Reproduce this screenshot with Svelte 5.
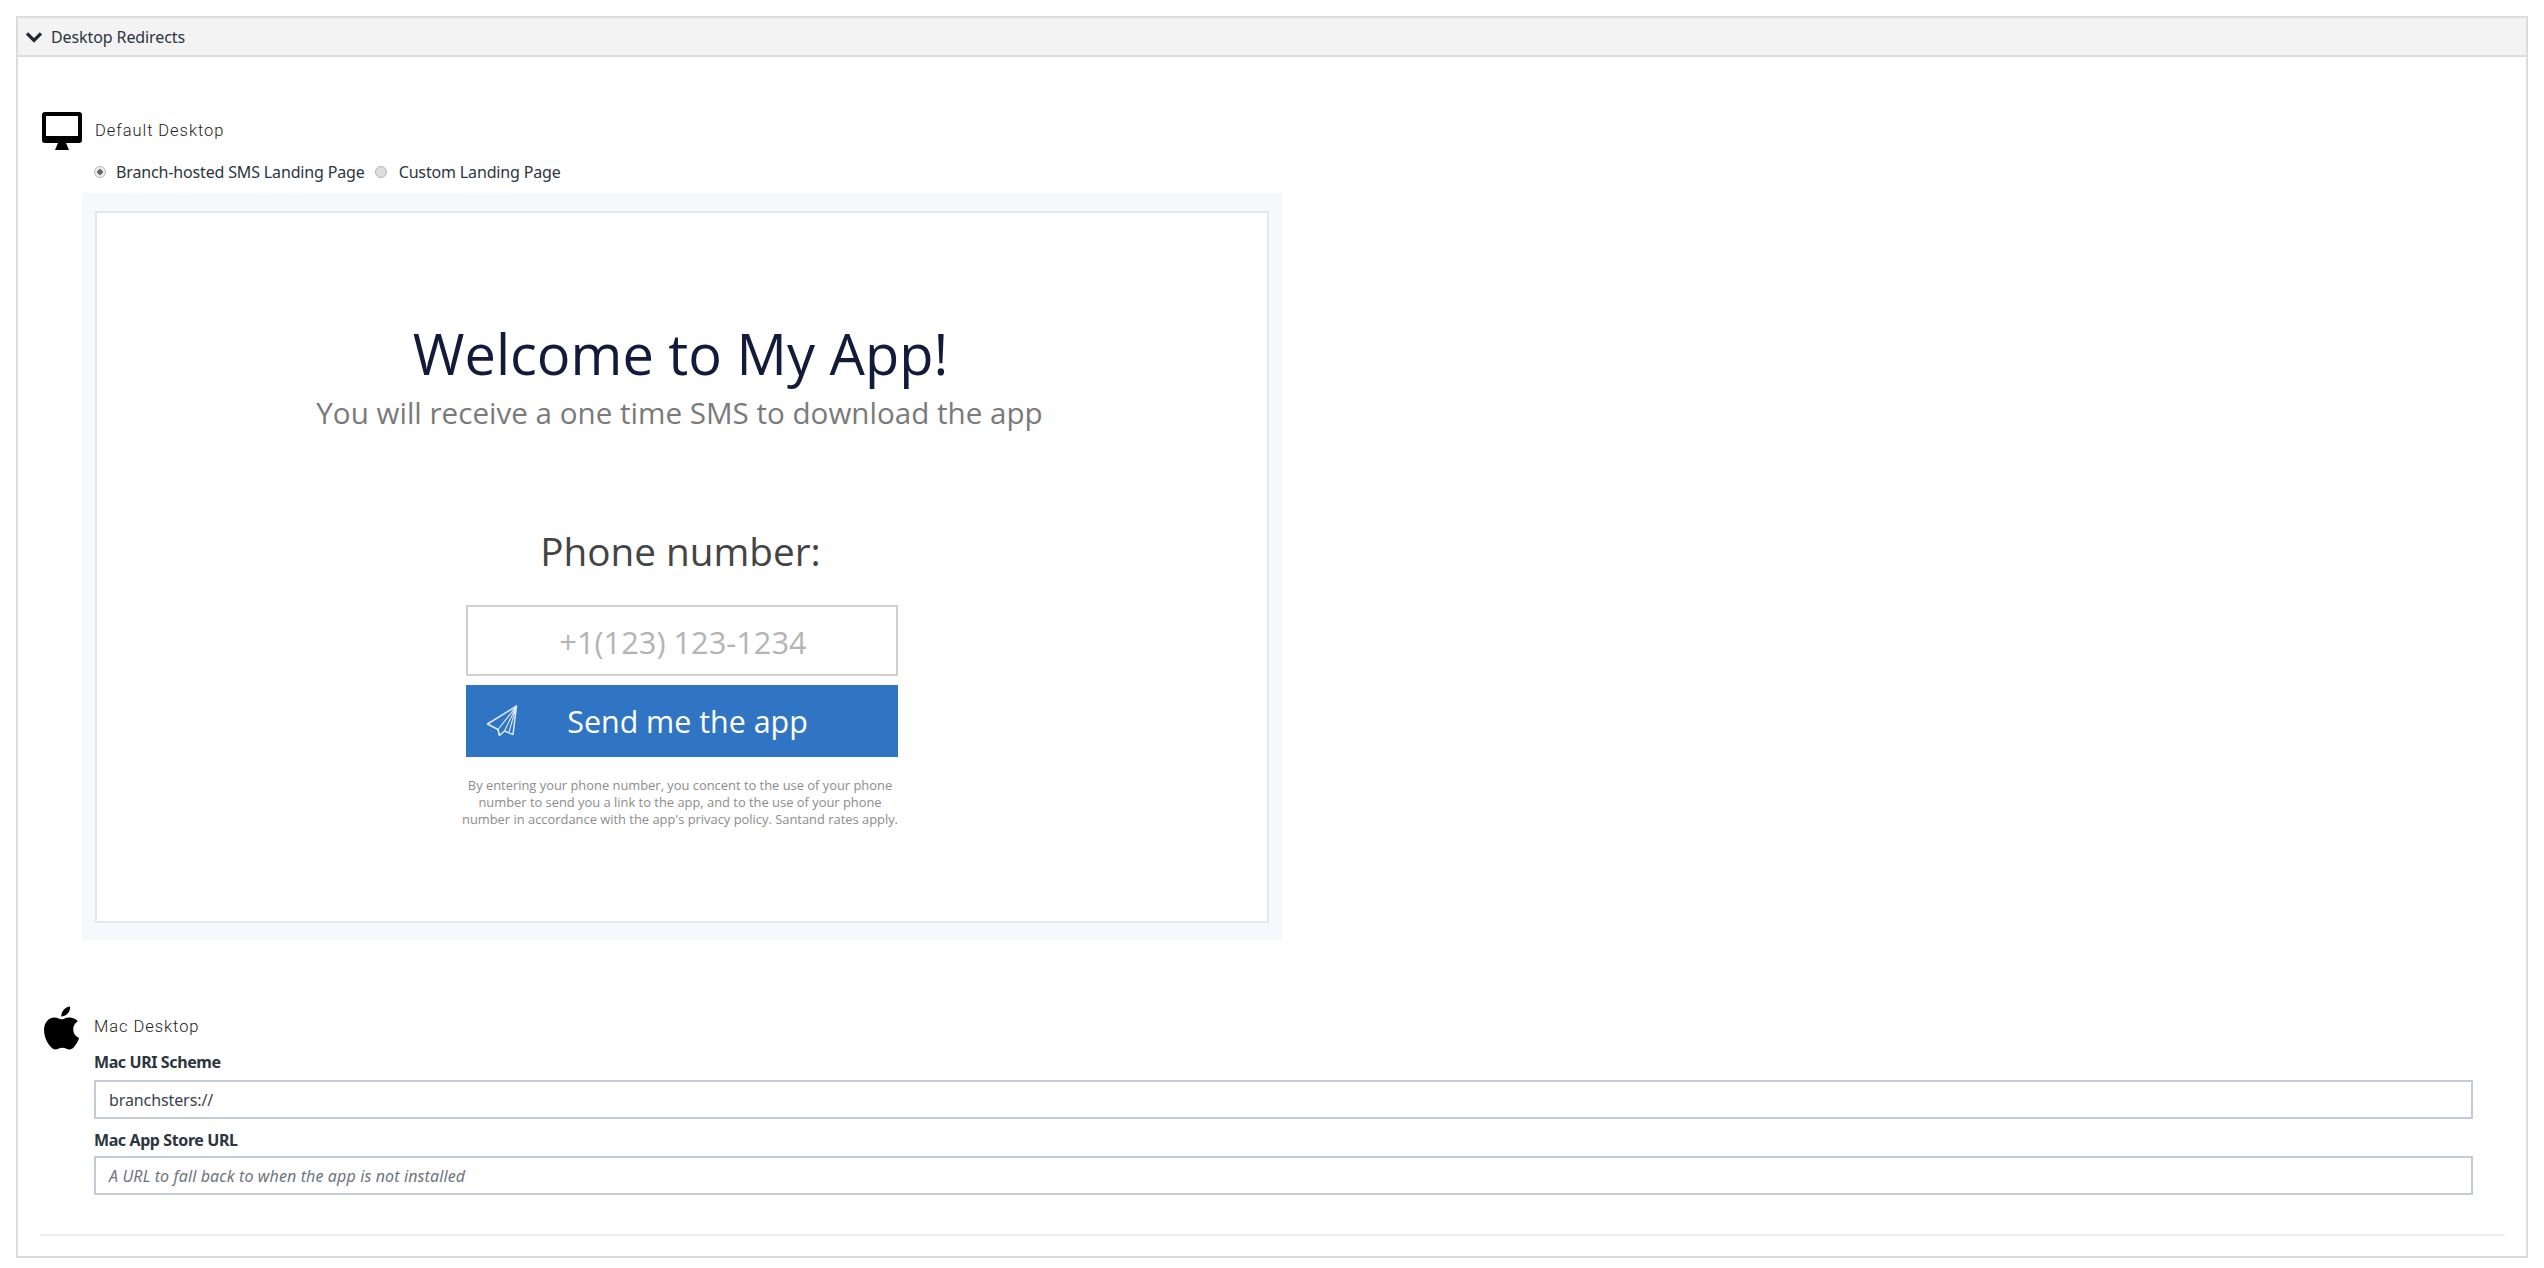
<script>
  const fields = [
    { label: 'Mac URI Scheme', value: 'branchsters://', placeholder: '' },
    { label: 'Mac App Store URL', value: '', placeholder: 'A URL to fall back to when the app is not installed' }
  ];
</script>

<div class="page">
  <section class="panel">
    <header class="head">
      <svg class="chev" viewBox="0 0 18 12" width="18" height="12"><path d="M2 2.4 9 9.4l7-7" fill="none" stroke="#222b33" stroke-width="3.4"/></svg>
      <span>Desktop Redirects</span>
    </header>
    <div class="body">
      <div class="title t1">
        <svg class="mon" viewBox="0 0 40 38" width="40" height="38">
          <path fill="#000" fill-rule="evenodd" d="M3 0h34a3 3 0 0 1 3 3v25a3 3 0 0 1-3 3H3a3 3 0 0 1-3-3V3a3 3 0 0 1 3-3Zm1 4v20h32V4Z"/>
          <path fill="#000" d="M16 31h8l3 7H13Z"/>
        </svg>
        <span>Default Desktop</span>
      </div>
      <div class="radios">
        <span class="radio on"></span><label for="r1">Branch-hosted SMS Landing Page</label>
        <span class="radio second"></span><label for="r2">Custom Landing Page</label>
      </div>
      <div class="preview">
        <div class="inner">
          <h1>Welcome to My App!</h1>
          <h2>You will receive a one time SMS to download the app</h2>
          <h3>Phone number:</h3>
          <div class="col">
            <div class="phone">+1(123) 123-1234</div>
            <div class="send">
              <svg viewBox="0 0 32 32" width="32" height="32" fill="none" stroke="#dfeaf6" stroke-width="1.5" stroke-linejoin="round">
                <path d="M30.500 1 1.500 19l10.500 5.500 1.500 6 5-4.500 8.500 3.500Z"/>
                <path d="M30.500 1 12 24.500l1.500 6M30.500 1 18.500 26M30.500 1 23 27" stroke-width="1.100"/>
              </svg>
              <span>Send me the app</span>
            </div>
            <p>By entering your phone number, you concent to the use of your phone<br />number to send you a link to the app, and to the use of your phone<br />number in accordance with the app's privacy policy. Santand rates apply.</p>
          </div>
        </div>
      </div>
      <div class="title t2">
        <svg class="apple" viewBox="0 0 814 1000" width="35" height="44">
          <path fill="#000" d="M788 341c-6 4-108 62-108 190 0 149 131 201 135 203-1 3-21 72-69 142-43 62-88 124-156 124s-86-40-165-40c-77 0-104 41-166 41s-106-57-156-127C45 792 0 667 0 548c0-191 124-292 246-292 65 0 119 43 160 43 39 0 100-45 174-45 28 0 129 2 208 87ZM555 159c31-36 52-87 52-137 0-7-1-14-2-20-50 2-110 33-146 75-28 32-55 83-55 135 0 8 1 15 2 18 3 1 9 1 14 1 45 0 102-30 135-72Z"/>
        </svg>
        <span>Mac Desktop</span>
      </div>
      <div class="fields">
        {#each fields as f}
          <div class="field">
            <div class="lab">{f.label}</div>
            <div class="inp" class:ph={!f.value}>{f.value || f.placeholder}</div>
          </div>
        {/each}
      </div>
      <hr />
    </div>
  </section>
</div>

<style>
  :global(body) { margin: 0; background: #fff; }
  .page { padding: 16px 16px 10px; width: 2512px; height: 1242px; font-family: "Open Sans", sans-serif; }
  .panel { border: 2px solid #dcdcdc; height: 100%; box-sizing: border-box; display: flex; flex-direction: column; }
  .head { height: 37px; background: #f3f3f3; border-bottom: 2px solid #dcdcdc; display: flex; align-items: center; padding-left: 7px; gap: 8px; font-family: "Noto Sans", sans-serif; font-size: 16px; color: #2c3540; letter-spacing: -.1px; flex: none; }
  .body { flex: 1; padding: 55px 21px 0 22px; }
  .title { display: flex; align-items: center; font-family: "Roboto", sans-serif; font-weight: 300; font-size: 16.5px; letter-spacing: .95px; color: #222; }
  .t1 { gap: 13px; padding-left: 2px; height: 38px; }
  .t1 span { margin-top: -2px; }
  .t2 { gap: 15px; padding-left: 4px; height: 44px; margin-top: 66px; }
  .t2 span { margin-top: -4px; }
  .radios { display: flex; align-items: center; margin: 10px 0 0 54px; height: 24px; font-family: "Noto Sans", sans-serif; font-size: 16px; letter-spacing: -.15px; color: #2c3540; }
  .radio { width: 12px; height: 12px; border-radius: 50%; border: 1px solid #b5b5b5; background: #ddd; box-sizing: border-box; margin-right: 10px; }
  .radio.second { margin-left: 10px; margin-right: 12px; }
  .radio.on { background: radial-gradient(circle, #666 0 2.5px, #eee 3px); }
  .preview { width: 1200px; height: 747px; margin: 9px 0 0 42px; padding: 18px 13px 17px; box-sizing: border-box; background: #f7f8fc; }
  .inner { height: 100%; box-sizing: border-box; background: #fff; border: 2px solid #e3e6ef; display: flex; flex-direction: column; align-items: center; padding-top: 102px; }
  h1 { margin: 0 3px 0 0; font-weight: 400; font-size: 56px; line-height: 76px; color: #131a3a; }
  h2 { margin: 0 5px 0 0; font-weight: 400; font-size: 29.6px; line-height: 44px; color: #7a7a7a; }
  h3 { margin: 88px 3px 0 0; font-weight: 400; font-size: 38.7px; line-height: 56px; color: #444; }
  .col { width: 432px; margin-top: 26px; display: flex; flex-direction: column; }
  .phone { height: 71px; box-sizing: border-box; border: 2px solid #d0d0d0; display: flex; align-items: center; justify-content: center; padding: 2px 0 0 2px; font-size: 30.8px; color: #b4b4b4; }
  .send { height: 72px; margin-top: 9px; background: #3074c4; display: flex; align-items: center; color: #fff; font-size: 30.4px; padding-left: 20px; }
  .send span { flex: 1; text-align: center; padding-right: 41px; }
  p { margin: 20px -4px 0 -8px; text-align: center; font-size: 12.9px; line-height: 17.2px; color: #8c8c8c; white-space: nowrap; }
  .fields { margin: 1px 0 0 54px; width: 2379px; }
  .field + .field { margin-top: 10px; }
  .field:first-child .lab { margin-bottom: 7px; }
  .lab { font-family: "Noto Sans", sans-serif; font-weight: 700; font-size: 16px; line-height: 22px; letter-spacing: -.4px; color: #2c3540; margin-bottom: 5px; }
  .inp { height: 39px; box-sizing: border-box; border: 2px solid #c2ccd9; padding: 0 13px; display: flex; align-items: center; font-family: "Noto Sans", sans-serif; font-size: 16px; letter-spacing: -.1px; color: #39424e; }
  .ph { font-style: italic; color: #6d7580; letter-spacing: .12px; }
  hr { border: 0; height: 2px; background: #eee; margin: 39px 0 0; }
</style>
